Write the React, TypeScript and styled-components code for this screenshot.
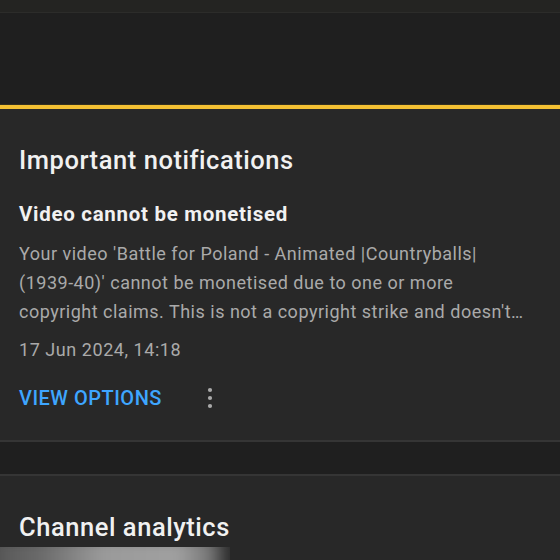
import * as React from "react";
import styled, { createGlobalStyle } from "styled-components";

const Global = createGlobalStyle`
  html, body {
    margin: 0;
    padding: 0;
    background: #1f1f1f;
  }
  body {
    font-family: Roboto, "Noto Sans", Arial, sans-serif;
    -webkit-font-smoothing: antialiased;
  }
`;

const Page = styled.div`
  width: 560px;
  height: 560px;
  overflow: hidden;
  display: flex;
  flex-direction: column;
  background: #1f1f1f;
`;

const TopBar = styled.div`
  height: 12px;
  background: #242422;
  border-bottom: 1px solid #2c2c2a;
  flex: none;
`;

const Header = styled.div`
  height: 91px;
  flex: none;
  border-bottom: 1px solid #34301f;
`;

const Card = styled.section<{ $accent?: boolean }>`
  flex: none;
  background: #282828;
  padding: 35px 19px 28px;
  border-top: ${(p) => (p.$accent ? "4px solid #f4c033" : "2px solid #353535")};
  border-bottom: ${(p) => (p.$accent ? "2px solid #353535" : "none")};
`;

const Gap = styled.div`
  height: 32px;
  flex: none;
  background: #1f1f1f;
`;

const CardTitle = styled.h2`
  margin: 0;
  font-size: 25.5px;
  line-height: 32px;
  font-weight: 500;
  color: #f1f1f1;
  letter-spacing: 0.55px;
`;

const ItemTitle = styled.h3`
  margin: 24px 0 0;
  font-size: 20.5px;
  line-height: 28px;
  font-weight: 700;
  color: #f1f1f1;
  letter-spacing: 0.7px;
`;

const Body = styled.p`
  margin: 11px 0 0;
  font-size: 18px;
  line-height: 29px;
  color: #aaaaaa;
  letter-spacing: 0.5px;
  display: -webkit-box;
  -webkit-line-clamp: 3;
  -webkit-box-orient: vertical;
  overflow: hidden;
  height: 87px;
  padding-right: 4px;
`;

const NoWrap = styled.span`
  white-space: nowrap;
`;

const Meta = styled.div`
  margin-top: 9px;
  font-size: 18px;
  line-height: 29px;
  color: #aaaaaa;
  letter-spacing: 0.55px;
`;

const Actions = styled.div`
  margin-top: 20px;
  display: flex;
  align-items: center;
  gap: 42px;
`;

const TextButton = styled.button`
  background: none;
  border: none;
  padding: 0;
  font-family: inherit;
  font-size: 20px;
  line-height: 28px;
  font-weight: 500;
  color: #3ea6ff;
  letter-spacing: 0.5px;
  cursor: pointer;
`;

const MenuButton = styled.button`
  background: none;
  border: none;
  padding: 0;
  width: 12px;
  height: 28px;
  display: flex;
  align-items: center;
  justify-content: center;
  color: #aaaaaa;
`;

const ThumbFrame = styled.div`
  margin: 4px -19px 0;
  width: 230px;
  height: 40px;
  overflow: hidden;
`;

const ThumbBlur = styled.div`
  margin: -10px;
  height: 60px;
  background: linear-gradient(90deg, #555 0%, #6a6a6a 20%, #9a9a9a 45%, #a0a0a0 75%, #777 88%, #282828 96%);
  filter: blur(7px);
`;

function Dots() {
  return (
    <svg width="6" height="22" viewBox="0 0 6 22" fill="currentColor">
      <circle cx="3" cy="3" r="2.1" />
      <circle cx="3" cy="11" r="2.1" />
      <circle cx="3" cy="19" r="2.1" />
    </svg>
  );
}

export default function App() {
  return (
    <Page>
      <Global />
      <TopBar />
      <Header />
      <Card $accent>
        <CardTitle>Important notifications</CardTitle>
        <ItemTitle>Video cannot be monetised</ItemTitle>
        <Body>
          Your video 'Battle for Poland - Animated |Countryballs| <NoWrap>(1939-40)'</NoWrap> cannot
          be monetised due to one or more copyright claims. This is not a copyright strike and
          doesn't affect your channel's standing.
        </Body>
        <Meta>17 Jun 2024, 14:18</Meta>
        <Actions>
          <TextButton>VIEW OPTIONS</TextButton>
          <MenuButton aria-label="More">
            <Dots />
          </MenuButton>
        </Actions>
      </Card>
      <Gap />
      <Card>
        <CardTitle>Channel analytics</CardTitle>
        <ThumbFrame>
          <ThumbBlur />
        </ThumbFrame>
      </Card>
    </Page>
  );
}
